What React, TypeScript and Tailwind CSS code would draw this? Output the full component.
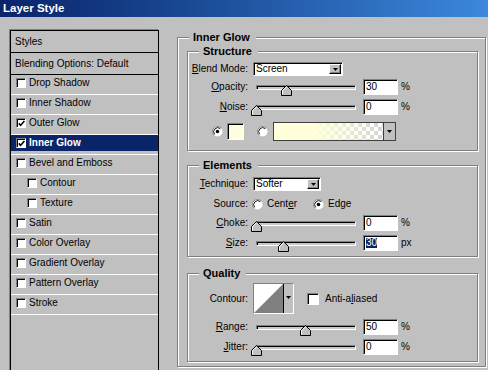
import React from "react";

const sunken =
  "border border-t-[#808080] border-l-[#808080] border-b-white border-r-white shadow-[inset_1px_1px_0_#000]";
const raised =
  "border border-t-white border-l-white border-b-black border-r-black shadow-[inset_-1px_-1px_0_#808080]";

const styles = [
  { label: "Drop Shadow" },
  { label: "Inner Shadow" },
  { label: "Outer Glow", on: true },
  { label: "Inner Glow", on: true, selected: true },
  { label: "Bevel and Emboss" },
  { label: "Contour", indent: true },
  { label: "Texture", indent: true },
  { label: "Satin" },
  { label: "Color Overlay" },
  { label: "Gradient Overlay" },
  { label: "Pattern Overlay" },
  { label: "Stroke" },
];

function Arrow() {
  return (
    <svg width="5" height="3" viewBox="0 0 5 3">
      <path d="M0 0 H5 L2.5 3 Z" fill="#000" />
    </svg>
  );
}

function Check({ on, className = "" }: { on?: boolean; className?: string }) {
  return (
    <div
      className={`flex shrink-0 items-center justify-center bg-white ${sunken} ${className}`}
    >
      {on && (
        <svg width="7" height="7" viewBox="0 0 7 7">
          <path d="M0.8 3.4 L2.6 5.4 L6.4 1" stroke="#000" strokeWidth="1.6" fill="none" />
        </svg>
      )}
    </div>
  );
}

function Radio({ on, className = "" }: { on?: boolean; className?: string }) {
  return (
    <svg width="11" height="11" viewBox="0 0 12 12" className={`shrink-0 ${className}`}>
      <circle cx="6" cy="6" r="5.5" fill="#fff" />
      <path d="M2.1 9.9 A5.5 5.5 0 0 1 9.9 2.1" stroke="#808080" fill="none" />
      <path d="M2.9 9.1 A4.4 4.4 0 0 1 9.1 2.9" stroke="#000" fill="none" />
      {on && <circle cx="6" cy="6" r="1.9" fill="#000" />}
    </svg>
  );
}

function Group({
  title,
  className = "",
  children,
}: {
  title: string;
  className?: string;
  children: React.ReactNode;
}) {
  return (
    <div
      className={`relative border border-[#808080] shadow-[inset_1px_1px_0_#fff,1px_1px_0_#fff] ${className}`}
    >
      <span className="absolute left-[11px] top-[-8px] h-[14px] bg-[#c0c0c0] pl-[4px] pr-[6px] text-[11px] font-bold leading-[14px]">
        {title}
      </span>
      {children}
    </div>
  );
}

function Label({ children }: { children: React.ReactNode }) {
  return <div className="w-[60px] shrink-0 text-right">{children}</div>;
}

function Select({ text, className = "" }: { text: string; className?: string }) {
  return (
    <div className={`ml-[5px] flex h-[14px] items-center bg-white ${sunken} ${className}`}>
      <span className="flex-1 pl-[2px]">{text}</span>
      <div
        className={`mr-[1px] flex h-[10px] w-[12px] items-center justify-center bg-[#c0c0c0] ${raised}`}
      >
        <Arrow />
      </div>
    </div>
  );
}

function SliderRow({
  label,
  pct,
  value,
  unit,
  selected,
  className = "",
}: {
  label: React.ReactNode;
  pct: number;
  value: string;
  unit: string;
  selected?: boolean;
  className?: string;
}) {
  return (
    <div className={`flex h-[16px] items-center ${className}`}>
      <Label>{label}</Label>
      <div className="relative ml-[8px] flex h-[16px] w-[100px] items-center">
        <div className={`h-[5px] w-full bg-[#c8c8c8] ${sunken}`} />
        <svg
          width="11"
          height="11"
          viewBox="0 0 11 11"
          className="absolute top-[6px]"
          style={{ left: (pct * 99) / 100 - 5 }}
        >
          <path d="M0.5 10.5 V5.5 L5.5 0.5 L10.5 5.5 V10.5 Z" fill="#c0c0c0" stroke="#000" />
          <path d="M1.5 9.5 V5.9 L5.5 1.9" stroke="#fff" fill="none" />
        </svg>
      </div>
      <div className={`ml-[7px] flex h-[16px] w-[35px] items-center bg-white pl-[2px] ${sunken}`}>
        {selected ? <span className="bg-[#0a246a] text-white">{value}</span> : value}
      </div>
      <span className="ml-[3px]">{unit}</span>
    </div>
  );
}

export default function App() {
  return (
    <div className="h-[370px] w-[488px] overflow-hidden bg-[#c0c0c0] font-['Liberation_Sans',Arial,sans-serif] text-[10px] leading-none text-black">
      <div className="flex h-[17px] items-center bg-linear-to-r from-[#0a246a] to-[#3c88dc] pl-[3px] text-[11.5px] font-bold text-white">
        Layer Style
      </div>

      <div className="flex items-start pt-[13px]">
        {/* styles list */}
        <div className="ml-[10px] h-[345px] w-[149px] shrink-0 border border-black bg-[#c0c0c0] shadow-[-1px_-1px_0_#808080]">
          <div className="flex h-[21px] items-center pl-[4px]">Styles</div>
          <div className="h-[1px] bg-black" />
          <div className="flex h-[21px] items-center pl-[4px]">Blending Options: Default</div>
          <div className="h-[1px] bg-black" />
          {styles.map((s) => (
            <div key={s.label} className="h-[20px] border-b border-white">
              <div
                className={`flex h-[16px] items-center ${
                  s.selected ? "bg-[#0a246a] font-bold text-white" : ""
                }`}
              >
                <Check
                  on={s.on}
                  className={`h-[10px] w-[10px] ${s.indent ? "ml-[16px]" : "ml-[5px]"}`}
                />
                <span className="ml-[3px]">{s.label}</span>
              </div>
            </div>
          ))}
        </div>

        {/* settings */}
        <Group title="Inner Glow" className="ml-[18px] mt-[7px] w-[309px] pb-[4px] pl-[9px] pr-[7px] pt-[13px]">
          <Group title="Structure" className="pb-[9px] pt-[10px]">
            <div className="flex h-[14px] items-center">
              <Label>
                <span className="underline">B</span>lend Mode:
              </Label>
              <Select text="Screen" className="w-[90px]" />
            </div>
            <SliderRow
              className="mt-[3px]"
              label={
                <>
                  <span className="underline">O</span>pacity:
                </>
              }
              pct={30}
              value="30"
              unit="%"
            />
            <SliderRow
              className="mt-[4px]"
              label={
                <>
                  <span className="underline">N</span>oise:
                </>
              }
              pct={0}
              value="0"
              unit="%"
            />
            <div className="mt-[7px] flex h-[19px] items-center">
              <Radio on className="ml-[24px]" />
              <div className={`ml-[4px] h-[17px] w-[17px] bg-[#ffffe0] ${sunken}`} />
              <Radio className="ml-[13px]" />
              <div className="ml-[5px] flex h-[19px] w-[123px] border border-[#404040]">
                <div className="flex-1 bg-[image:linear-gradient(to_right,#ffffdc_35%,rgba(255,255,220,0)),repeating-conic-gradient(#d4d4d4_0_25%,#ffffff_0_50%)] bg-[length:100%_100%,8px_8px]" />
                <div className="flex w-[12px] items-center justify-center border-l border-[#404040] bg-[#c0c0c0]">
                  <Arrow />
                </div>
              </div>
            </div>
          </Group>

          <Group title="Elements" className="mt-[14px] pb-[5px] pt-[11px]">
            <div className="flex h-[14px] items-center">
              <Label>
                <span className="underline">T</span>echnique:
              </Label>
              <Select text="Softer" className="w-[68px]" />
            </div>
            <div className="mt-[5px] flex h-[16px] items-center">
              <Label>Source:</Label>
              <Radio className="ml-[4px]" />
              <span className="ml-[4px] w-[46px]">
                Cent<span className="underline">e</span>r
              </span>
              <Radio on />
              <span className="ml-[4px]">
                Ed<span className="underline">g</span>e
              </span>
            </div>
            <SliderRow
              className="mt-[3px]"
              label={
                <>
                  <span className="underline">C</span>hoke:
                </>
              }
              pct={0}
              value="0"
              unit="%"
            />
            <SliderRow
              className="mt-[4px]"
              label={
                <>
                  <span className="underline">S</span>ize:
                </>
              }
              pct={27}
              value="30"
              unit="px"
              selected
            />
          </Group>

          <Group title="Quality" className="mt-[16px] pb-[6px] pt-[9px]">
            <div className="flex h-[31px] items-center">
              <Label>Contour:</Label>
              <div className={`ml-[5px] flex h-[31px] w-[41px] ${sunken}`}>
                <svg width="29" height="29" viewBox="0 0 29 29" className="shrink-0">
                  <rect width="29" height="29" fill="#fff" />
                  <path d="M0 29 L29 0 V29 Z" fill="#808080" />
                </svg>
                <div className="flex flex-1 justify-center border-l border-black bg-[#c0c0c0] pt-[12px]">
                  <Arrow />
                </div>
              </div>
              <Check className="ml-[13px] h-[12px] w-[12px]" />
              <span className="ml-[6px]">
                Anti-a<span className="underline">l</span>iased
              </span>
            </div>
            <SliderRow
              className="mt-[5px]"
              label={
                <>
                  <span className="underline">R</span>ange:
                </>
              }
              pct={49}
              value="50"
              unit="%"
            />
            <SliderRow
              className="mt-[4px]"
              label={
                <>
                  <span className="underline">J</span>itter:
                </>
              }
              pct={0}
              value="0"
              unit="%"
            />
          </Group>
        </Group>
      </div>
    </div>
  );
}
